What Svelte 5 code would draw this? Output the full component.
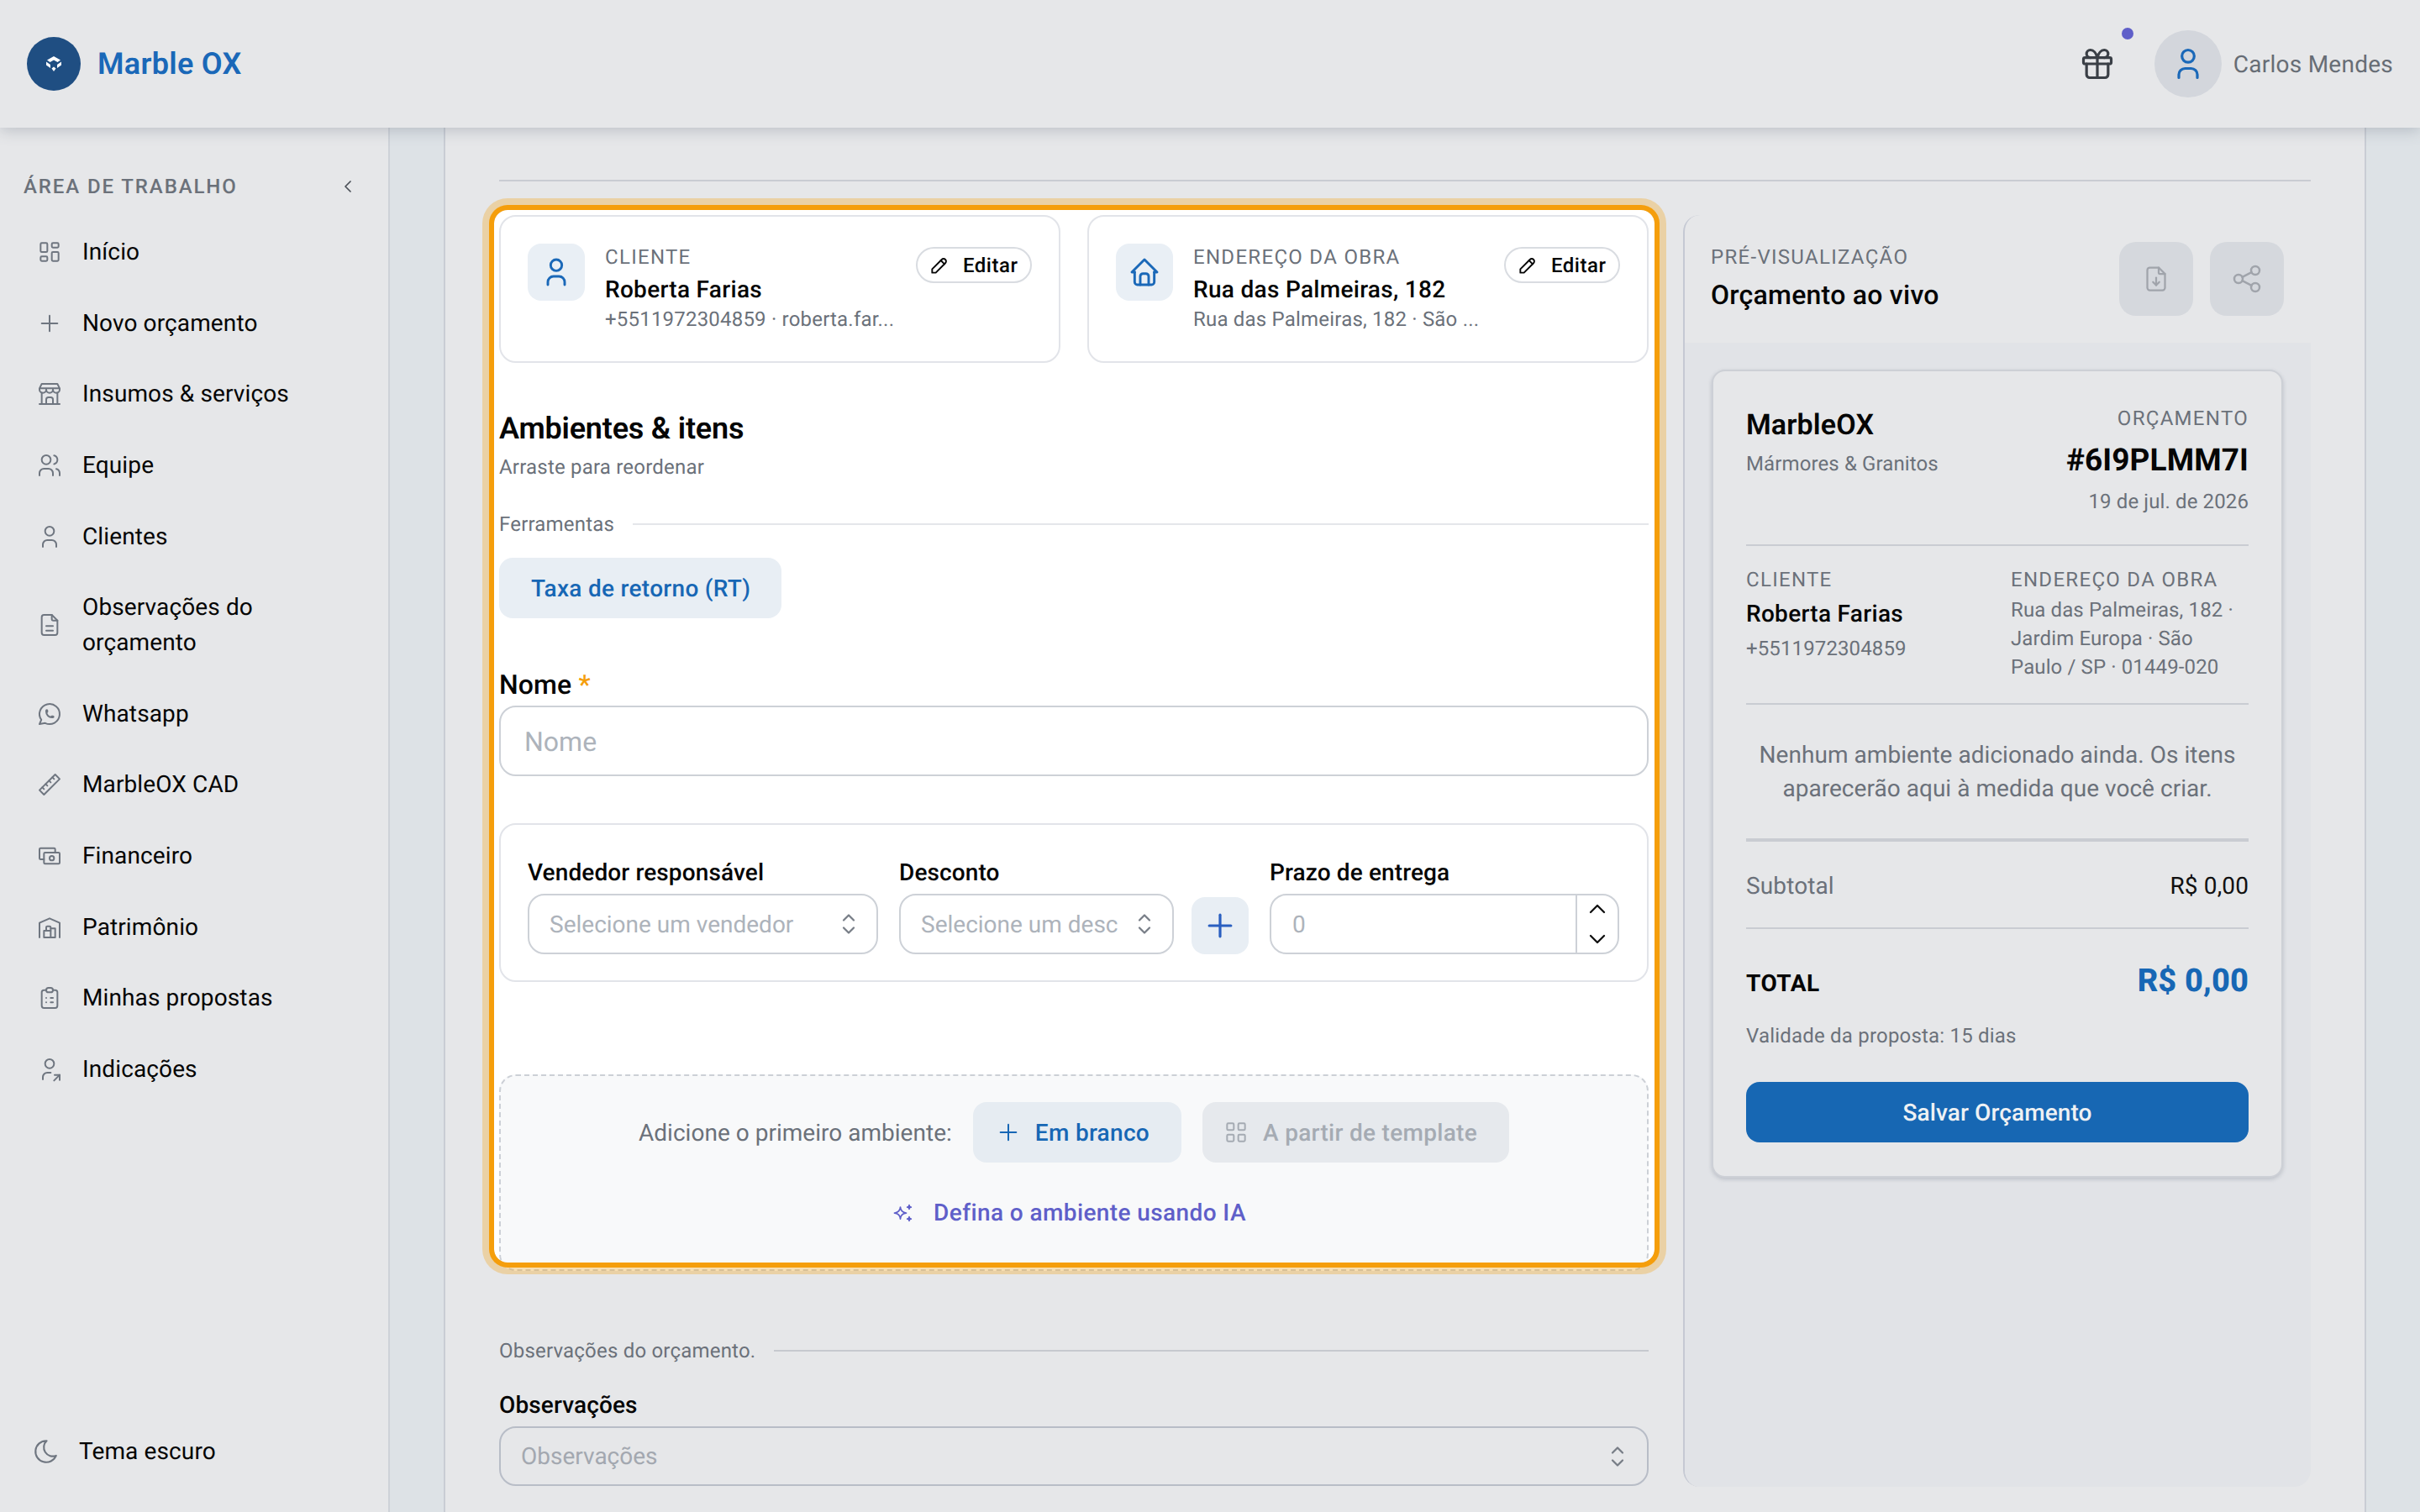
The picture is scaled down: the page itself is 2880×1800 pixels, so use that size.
<script>
  const P = {
    dash: ["M5 4h4a1 1 0 0 1 1 1v6a1 1 0 0 1 -1 1h-4a1 1 0 0 1 -1 -1v-6a1 1 0 0 1 1 -1","M5 16h4a1 1 0 0 1 1 1v2a1 1 0 0 1 -1 1h-4a1 1 0 0 1 -1 -1v-2a1 1 0 0 1 1 -1","M15 12h4a1 1 0 0 1 1 1v6a1 1 0 0 1 -1 1h-4a1 1 0 0 1 -1 -1v-6a1 1 0 0 1 1 -1","M15 4h4a1 1 0 0 1 1 1v2a1 1 0 0 1 -1 1h-4a1 1 0 0 1 -1 -1v-2a1 1 0 0 1 1 -1"],
    grid: ["M4 5a1 1 0 0 1 1 -1h4a1 1 0 0 1 1 1v4a1 1 0 0 1 -1 1h-4a1 1 0 0 1 -1 -1z","M14 5a1 1 0 0 1 1 -1h4a1 1 0 0 1 1 1v4a1 1 0 0 1 -1 1h-4a1 1 0 0 1 -1 -1z","M4 15a1 1 0 0 1 1 -1h4a1 1 0 0 1 1 1v4a1 1 0 0 1 -1 1h-4a1 1 0 0 1 -1 -1z","M14 15a1 1 0 0 1 1 -1h4a1 1 0 0 1 1 1v4a1 1 0 0 1 -1 1h-4a1 1 0 0 1 -1 -1z"],
    plus: ["M12 5v14","M5 12h14"],
    store: ["M3 21l18 0","M3 7v1a3 3 0 0 0 6 0v-1m0 1a3 3 0 0 0 6 0v-1m0 1a3 3 0 0 0 6 0v-1h-18l2 -4h14l2 4","M5 21l0 -10.15","M19 21l0 -10.15","M9 21v-4a2 2 0 0 1 2 -2h2a2 2 0 0 1 2 2v4"],
    users: ["M9 7m-4 0a4 4 0 1 0 8 0a4 4 0 1 0 -8 0","M3 21v-2a4 4 0 0 1 4 -4h4a4 4 0 0 1 4 4v2","M16 3.13a4 4 0 0 1 0 7.75","M21 21v-2a4 4 0 0 0 -3 -3.85"],
    user: ["M8 7a4 4 0 1 0 8 0a4 4 0 0 0 -8 0","M6 21v-2a4 4 0 0 1 4 -4h4a4 4 0 0 1 4 4v2"],
    file: ["M14 3v4a1 1 0 0 0 1 1h4","M17 21h-10a2 2 0 0 1 -2 -2v-14a2 2 0 0 1 2 -2h7l5 5v11a2 2 0 0 1 -2 2z","M9 17h6","M9 13h6"],
    whatsapp: ["M3 21l1.65 -3.8a9 9 0 1 1 3.4 2.9l-5.05 .9","M9 10a.5 .5 0 0 0 1 0v-1a.5 .5 0 0 0 -1 0v1a5 5 0 0 0 5 5h1a.5 .5 0 0 0 0 -1h-1a.5 .5 0 0 0 0 1"],
    ruler: ["M17 3l4 4l-14 14l-4 -4z","M16 7l-1.5 -1.5","M13 10l-1.5 -1.5","M10 13l-1.5 -1.5","M7 16l-1.5 -1.5"],
    cash: ["M7 15h-3a1 1 0 0 1 -1 -1v-8a1 1 0 0 1 1 -1h12a1 1 0 0 1 1 1v3","M7 10a1 1 0 0 1 1 -1h12a1 1 0 0 1 1 1v8a1 1 0 0 1 -1 1h-12a1 1 0 0 1 -1 -1z","M12 14a2 2 0 1 0 4 0a2 2 0 0 0 -4 0"],
    warehouse: ["M3 21v-13l9 -4l9 4v13","M13 13h4v8h-10v-6h6","M13 21v-9a1 1 0 0 0 -1 -1h-2a1 1 0 0 0 -1 1v3"],
    clipboard: ["M9 5h-2a2 2 0 0 0 -2 2v12a2 2 0 0 0 2 2h10a2 2 0 0 0 2 -2v-12a2 2 0 0 0 -2 -2h-2","M9 5a2 2 0 0 1 2 -2h2a2 2 0 0 1 2 2v0a2 2 0 0 1 -2 2h-2a2 2 0 0 1 -2 -2z","M9 12l.01 0","M13 12l2 0","M9 16l.01 0","M13 16l2 0"],
    userShare: ["M8 7a4 4 0 1 0 8 0a4 4 0 0 0 -8 0","M6 21v-2a4 4 0 0 1 4 -4h3","M16 22l5 -5","M21 21.5v-4.5h-4.5"],
    moon: ["M12 3c.132 0 .263 0 .393 0a7.5 7.5 0 0 0 7.92 12.446a9 9 0 1 1 -8.313 -12.454z"],
    left: ["M15 6l-6 6l6 6"],
    up: ["M6 15l6 -6l6 6"],
    down: ["M6 9l6 6l6 -6"],
    selector: ["M8 9l4 -4l4 4","M16 15l-4 4l-4 -4"],
    pencil: ["M4 20h4l10.5 -10.5a2.828 2.828 0 1 0 -4 -4l-10.5 10.5v4","M13.5 6.5l4 4"],
    home: ["M5 12l-2 0l9 -9l9 9l-2 0","M5 12v7a2 2 0 0 0 2 2h10a2 2 0 0 0 2 -2v-7","M9 21v-6a2 2 0 0 1 2 -2h2a2 2 0 0 1 2 2v6"],
    gift: ["M4 8h16a1 1 0 0 1 1 1v2a1 1 0 0 1 -1 1h-16a1 1 0 0 1 -1 -1v-2a1 1 0 0 1 1 -1z","M12 8l0 13","M19 12v7a2 2 0 0 1 -2 2h-10a2 2 0 0 1 -2 -2v-7","M7.5 8a2.5 2.5 0 0 1 0 -5a4.8 8 0 0 1 4.5 5a4.8 8 0 0 1 4.5 -5a2.5 2.5 0 0 1 0 5"],
    fileDown: ["M14 3v4a1 1 0 0 0 1 1h4","M17 21h-10a2 2 0 0 1 -2 -2v-14a2 2 0 0 1 2 -2h7l5 5v11a2 2 0 0 1 -2 2z","M12 17v-6","M9.5 14.5l2.5 2.5l2.5 -2.5"],
    share: ["M3 12a3 3 0 1 0 6 0a3 3 0 1 0 -6 0","M15 6a3 3 0 1 0 6 0a3 3 0 1 0 -6 0","M15 18a3 3 0 1 0 6 0a3 3 0 1 0 -6 0","M8.7 10.7l6.6 -3.4","M8.7 13.3l6.6 3.4"],
    sparkles: ["M16 18a2 2 0 0 1 2 2a2 2 0 0 1 2 -2a2 2 0 0 1 -2 -2a2 2 0 0 1 -2 2zm0 -12a2 2 0 0 1 2 2a2 2 0 0 1 2 -2a2 2 0 0 1 -2 -2a2 2 0 0 1 -2 2zm-7 12a6 6 0 0 1 6 -6a6 6 0 0 1 -6 -6a6 6 0 0 1 -6 6a6 6 0 0 1 6 6z"]
  };
  const nav = [
    ["dash", "Início"], ["plus", "Novo orçamento"], ["store", "Insumos & serviços"], ["users", "Equipe"],
    ["user", "Clientes"], ["file", "Observações do orçamento"], ["whatsapp", "Whatsapp"], ["ruler", "MarbleOX CAD"],
    ["cash", "Financeiro"], ["warehouse", "Patrimônio"], ["clipboard", "Minhas propostas"], ["userShare", "Indicações"]
  ];
</script>

{#snippet icon(name, size, sw = 1.5)}
  <svg class="ic" width={size} height={size} viewBox="0 0 24 24" fill="none" stroke="currentColor" stroke-width={sw} stroke-linecap="round" stroke-linejoin="round">
    {#each P[name] as d}<path {d} />{/each}
  </svg>
{/snippet}

<div class="root">
  <header class="top">
    <div class="brand">
      <span class="logo">
        <svg width="20" height="18" viewBox="0 0 20 18" fill="#fff">
          <path d="M10 0 18 4.5 14.5 7 10 4.5 5.500 7 2 4.500Z" />
          <path d="M1 6.500 6 10V14L1 10.500Z" />
          <path d="M19 6.500 14 10V14L19 10.500Z" />
          <path d="M7.500 14.500 10 12.500 12.500 14.500 10 18Z" />
        </svg>
      </span>
      <span class="brandname">Marble OX</span>
    </div>
    <div class="topright">
      <span class="gift">{@render icon("gift", 44, 1.75)}<i class="dot"></i></span>
      <span class="avatar">{@render icon("user", 44, 1.75)}</span>
      <span class="username">Carlos Mendes</span>
    </div>
  </header>

  <aside class="side">
    <div class="sidehead">
      <span>ÁREA DE TRABALHO</span>
      {@render icon("left", 24, 1.75)}
    </div>
    <nav>
      {#each nav as [ic, label]}
        <div class="navitem">
          <span class="navic">{@render icon(ic, 32)}</span>
          <span class="navlabel">{label}</span>
        </div>
      {/each}
    </nav>
    <div class="theme">
      <span class="navic">{@render icon("moon", 34)}</span>
      <span>Tema escuro</span>
    </div>
  </aside>

  <main class="panel">
    <div class="rule"></div>
    <div class="cols">
      <section class="left">
        <div class="spot">
          <div class="cards">
            <div class="card">
              <span class="tile">{@render icon("user", 40, 1.75)}</span>
              <div class="cardtext">
                <div class="cap">CLIENTE</div>
                <div class="cname">Roberta Farias</div>
                <div class="csub">+5511972304859 · roberta.far...</div>
              </div>
              <span class="edit">{@render icon("pencil", 26, 1.75)}<span>Editar</span></span>
            </div>
            <div class="card">
              <span class="tile">{@render icon("home", 40, 1.75)}</span>
              <div class="cardtext">
                <div class="cap">ENDEREÇO DA OBRA</div>
                <div class="cname">Rua das Palmeiras, 182</div>
                <div class="csub">Rua das Palmeiras, 182 · São ...</div>
              </div>
              <span class="edit">{@render icon("pencil", 26, 1.75)}<span>Editar</span></span>
            </div>
          </div>

          <h2 class="title">Ambientes &amp; itens</h2>
          <p class="hint">Arraste para reordenar</p>

          <div class="divider tools"><span>Ferramentas</span><i></i></div>
          <span class="softbtn rt">Taxa de retorno (RT)</span>

          <div class="namelabel">Nome <b>*</b></div>
          <div class="field name"><span>Nome</span></div>

          <div class="rowcard">
            <div class="fld">
              <div class="lab">Vendedor responsável</div>
              <div class="field sel"><span>Selecione um vendedor</span><em>{@render icon("selector", 36)}</em></div>
            </div>
            <div class="fld">
              <div class="lab">Desconto</div>
              <div class="descrow">
                <div class="field sel"><span>Selecione um desc</span><em>{@render icon("selector", 36)}</em></div>
                <span class="plusbtn">{@render icon("plus", 44, 1.75)}</span>
              </div>
            </div>
            <div class="fld">
              <div class="lab">Prazo de entrega</div>
              <div class="field num">
                <span>0</span>
                <div class="stepper">
                  <em>{@render icon("up", 32, 1.75)}</em>
                  <em>{@render icon("down", 32, 1.75)}</em>
                </div>
              </div>
            </div>
          </div>

          <div class="drop">
            <div class="droprow">
              <span class="dropq">Adicione o primeiro ambiente:</span>
              <span class="softbtn blank">{@render icon("plus", 32)}<span>Em branco</span></span>
              <span class="softbtn tmpl">{@render icon("grid", 32)}<span>A partir de template</span></span>
            </div>
            <div class="ai">{@render icon("sparkles", 28)}<span>Defina o ambiente usando IA</span></div>
          </div>
        </div>

        <div class="divider obs"><span>Observações do orçamento.</span><i></i></div>
        <div class="lab obslab">Observações</div>
        <div class="field obsfield"><span>Observações</span><em>{@render icon("selector", 36)}</em></div>
      </section>

      <section class="right">
        <div class="prevhead">
          <div>
            <div class="cap pv">PRÉ-VISUALIZAÇÃO</div>
            <div class="pvtitle">Orçamento ao vivo</div>
          </div>
          <div class="pvbtns">
            <span class="pvbtn">{@render icon("fileDown", 36)}</span>
            <span class="pvbtn">{@render icon("share", 40)}</span>
          </div>
        </div>
        <div class="prevbody">
          <div class="sheet">
            <div class="shead">
              <div>
                <div class="co">MarbleOX</div>
                <div class="cosub">Mármores &amp; Granitos</div>
              </div>
              <div class="sright">
                <div class="cap">ORÇAMENTO</div>
                <div class="sid">#6I9PLMM7I</div>
                <div class="cosub date">19 de jul. de 2026</div>
              </div>
            </div>
            <hr class="l1" />
            <div class="sparties">
              <div>
                <div class="cap">CLIENTE</div>
                <div class="sname">Roberta Farias</div>
                <div class="sphone">+5511972304859</div>
              </div>
              <div>
                <div class="cap">ENDEREÇO DA OBRA</div>
                <div class="saddr">Rua das Palmeiras, 182 · Jardim Europa · São Paulo / SP · 01449-020</div>
              </div>
            </div>
            <hr class="l2" />
            <p class="empty">Nenhum ambiente adicionado ainda. Os itens aparecerão aqui à medida que você criar.</p>
            <hr class="l3" />
            <div class="subtotal"><span>Subtotal</span><b>R$ 0,00</b></div>
            <hr class="l4" />
            <div class="total"><span>TOTAL</span><b>R$ 0,00</b></div>
            <div class="valid">Validade da proposta: 15 dias</div>
            <div class="save">Salvar Orçamento</div>
          </div>
        </div>
      </section>
    </div>
  </main>
</div>

<style>
  :global(body) { margin: 0; background: #dde2e6; }
  * { box-sizing: border-box; }
  .ic { display: block; flex: none; }
  .root {
    width: 2880px; height: 1800px; overflow: hidden;
    display: grid; grid-template-columns: 464px 1fr; grid-template-rows: 152px 1fr;
    font-family: Roboto, "Liberation Sans", sans-serif; color: #050505; background: #dde2e6;
    text-rendering: geometricPrecision; letter-spacing: .12px;
  }
  .top {
    grid-column: 1 / 3; background: #e6e7e9; display: flex; justify-content: space-between; align-items: center;
    padding: 0 32px; position: relative; z-index: 2;
    box-shadow: 0 4px 16px rgba(90, 100, 120, .28);
  }
  .brand { display: flex; align-items: center; gap: 20px; }
  .logo { width: 64px; height: 64px; border-radius: 50%; background: #1f4e82; display: grid; place-items: center; }
  .brandname { font-size: 36px; font-weight: 600; color: #1a68b8; letter-spacing: .3px; }
  .topright { display: flex; align-items: center; }
  .gift { position: relative; color: #3a3f46; margin-right: 46px; }
  .dot { position: absolute; width: 14px; height: 14px; border-radius: 50%; background: #5f5fc9; top: -21px; right: -21px; }
  .avatar { width: 80px; height: 80px; border-radius: 50%; background: #d3d6dc; color: #1a68b8; display: grid; place-items: center; margin-right: 14px; }
  .username { font-size: 28px; color: #676d75; letter-spacing: .25px; }

  .side { background: #e6e7e9; border-right: 2px solid #ced2d8; display: flex; flex-direction: column; min-height: 0; }
  .sidehead { display: flex; justify-content: space-between; align-items: center; padding: 56px 36px 0 28px; height: 84px; margin-bottom: 22px; font-size: 24px; font-weight: 500; letter-spacing: 1.9px; color: #6b717a; }
  .sidehead .ic { color: #4b5058; }
  .navitem { display: flex; align-items: center; gap: 23px; padding: 21.3px 0 21.3px 43px; font-size: 28px; line-height: 42px; }
  .navic { color: #6f7680; display: block; }
  .navlabel { max-width: 300px; }
  .theme { margin-top: auto; display: flex; align-items: center; gap: 22px; padding: 0 0 50px 38px; font-size: 28px; line-height: 44px; }

  .panel { margin: 0 64px 0 64px; background: #e6e7e9; border-left: 2px solid #c9cdd4; border-right: 2px solid #c9cdd4; padding: 62px 64px 0; overflow: hidden; }
  .rule { height: 2px; background: #c9ccd2; margin-bottom: 40px; }
  .cols { display: grid; grid-template-columns: 1368px 747px; column-gap: 41px; }

  .spot { position: relative; background: #fff; border-radius: 16px; margin: -6px -7px 0 -6px; padding: 6px 7px 0 6px; height: 1253px; }
  .spot::after { content: ""; position: absolute; inset: 0; border-radius: 16px; pointer-events: none; box-shadow: 0 0 0 6px #f59e0b, 0 0 0 14px rgba(245, 158, 11, .3); }

  .cards { display: grid; grid-template-columns: 1fr 1fr; gap: 32px; }
  .card { border: 2px solid #e2e4e9; border-radius: 20px; padding: 32px; display: flex; gap: 24px; min-height: 176px; }
  .tile { width: 68px; height: 68px; border-radius: 16px; background: #e9eff5; color: #1a68b8; display: grid; place-items: center; flex: none; }
  .cardtext { flex: 1; min-width: 0; }
  .cap { font-size: 24px; line-height: 30px; letter-spacing: 1.3px; color: #6b717a; white-space: nowrap; padding-top: 1px; }
  .cname { font-size: 28px; font-weight: 500; line-height: 38px; margin-top: 5px; white-space: nowrap; letter-spacing: .3px; }
  .csub { font-size: 24px; line-height: 32px; color: #6b717a; white-space: nowrap; letter-spacing: .2px; }
  .edit { display: inline-flex; align-items: center; gap: 15px; height: 43px; width: 138px; border: 2px solid #d9dce1; border-radius: 22px; padding: 0 13px; margin-top: 4px; font-size: 24px; font-weight: 500; flex: none; letter-spacing: .5px; }

  .title { font-size: 36px; line-height: 50px; font-weight: 600; margin: 53px 0 0; letter-spacing: -.2px; }
  .hint { font-size: 24px; line-height: 34px; color: #6b717a; margin: 4px 0 0; letter-spacing: .2px; }
  .divider { display: flex; align-items: center; gap: 22px; font-size: 24px; line-height: 34px; color: #6b717a; letter-spacing: .2px; }
  .divider i { flex: 1; height: 2px; background: #e4e6ea; }
  .tools { margin-top: 34px; }
  .softbtn { display: inline-flex; align-items: center; height: 72px; border-radius: 16px; font-size: 28px; font-weight: 500; background: #e8eef4; color: #1767b5; letter-spacing: .3px; white-space: nowrap; }
  .rt { margin-top: 23px; padding: 0 38px; width: 336px; }

  .namelabel { font-size: 32px; line-height: 40px; font-weight: 470; margin-top: 59px; }
  .namelabel b { color: #f59e0b; font-weight: 500; }
  .field { border: 2px solid #cdd1d7; border-radius: 20px; display: flex; align-items: center; color: #adb3bb; background: #fff; letter-spacing: 0; }
  .field em { margin-left: auto; color: #777d86; font-style: normal; display: block; }
  .name { height: 84px; margin-top: 5px; padding: 2px 28px 0; font-size: 32px; }

  .rowcard { margin-top: 56px; height: 189px; border: 2px solid #e2e4e9; border-radius: 20px; padding: 40px 32px 0; display: grid; grid-template-columns: 417px 416px 416px; column-gap: 25px; }
  .lab { font-size: 28px; line-height: 34px; font-weight: 470; }
  .sel { height: 72px; margin-top: 8px; padding: 0 15px 0 24px; font-size: 28px; white-space: nowrap; flex: 1; min-width: 0; overflow: hidden; }
  .descrow { display: flex; gap: 21px; align-items: flex-end; }
  .plusbtn { width: 68px; height: 68px; border-radius: 16px; background: #e8eef4; color: #2a5fc0; display: grid; place-items: center; flex: none; }
  .num { height: 72px; margin-top: 8px; padding-left: 25px; font-size: 28px; overflow: hidden; }
  .stepper { margin-left: auto; width: 50px; height: 100%; border-left: 2px solid #cdd1d7; display: flex; flex-direction: column; align-items: center; justify-content: space-between; color: #111; }
  .stepper em { color: #111; margin: 0; }

  .drop { margin-top: 110px; height: 234px; background: #f8f9fa; border: 2px dashed #ccd0d6; border-radius: 20px; padding-top: 31px; display: flex; flex-direction: column; align-items: center; }
  .droprow { display: flex; align-items: center; gap: 25px; }
  .dropq { font-size: 28px; color: #6b717a; letter-spacing: .02px; }
  .blank { gap: 16px; padding: 0 38px 0 26px; background: #e6ecf2; }
  .tmpl { gap: 16px; padding: 0 38px 0 24px; background: #e6e9ed; color: #a5abb3; }
  .ai { display: flex; align-items: center; gap: 22px; margin-top: 40px; line-height: 40px; font-size: 28px; font-weight: 500; color: #5f5fc9; margin-left: -12px; letter-spacing: .4px; }

  .obs { margin-top: 88px; }
  .divider.obs i { background: #c6c9cf; }
  .obslab { margin-top: 31px; }
  .obsfield { height: 71px; margin-top: 8px; padding: 0 17px 0 24px; font-size: 28px; background: transparent; border-color: #b8bdc7; color: #a3a8b0; border-radius: 20px; }

  .right { height: 1514px; border-left: 2px solid #c5c9d3; border-radius: 20px 0 0 20px; display: flex; flex-direction: column; overflow: hidden; }
  .prevhead { height: 152px; flex: none; display: flex; justify-content: space-between; align-items: center; padding: 0 32px 0 31px; }
  .pv { line-height: 30px; font-size: 24px; margin-top: -2px; }
  .pvtitle { font-size: 32px; font-weight: 500; line-height: 44px; margin-top: 8px; letter-spacing: .25px; }
  .pvbtns { display: flex; gap: 20px; }
  .pvbtn { width: 88px; height: 88px; border-radius: 20px; background: #d5d8dd; color: #a0a4ab; display: grid; place-items: center; }
  .prevbody { flex: 1; background: #e1e3e7; padding: 32px 33px 0 32px; border-radius: 0 0 20px 0; }
  .sheet { background: #e6e7e9; border: 2px solid #cdd0d6; border-radius: 16px; padding: 40px 39px 40px; box-shadow: 0 2px 5px rgba(60, 70, 90, .22); }
  .shead { display: flex; justify-content: space-between; }
  .co { font-size: 34px; line-height: 44px; font-weight: 600; padding-top: 2px; margin-bottom: -2px; }
  .cosub { font-size: 24px; line-height: 32px; color: #6b717a; margin-top: 10px; }
  .sright { text-align: right; }
  .sright .cap { line-height: 30px; }
  .sid { font-size: 37px; line-height: 48px; font-weight: 700; margin-top: 12px; margin-bottom: -2px; }
  hr { border: 0; margin: 0; background: #c9ccd2; height: 2px; }
  .l1 { margin-top: 35px; }
  .sparties { display: grid; grid-template-columns: 315px 1fr; padding-top: 24px; }
  .sname { font-size: 28px; font-weight: 500; line-height: 36px; margin-top: 8px; letter-spacing: .3px; }
  .sphone { font-size: 24px; line-height: 30px; color: #6b717a; margin-top: 8px; }
  .saddr { font-size: 24px; line-height: 34px; color: #6b717a; margin-top: 4px; padding-right: 12px; }
  .l2 { margin-top: 26px; }
  .empty { margin: 40px 0 0; font-size: 28px; line-height: 40px; color: #6b717a; text-align: center; letter-spacing: .04px; }
  .l3 { margin-top: 39px; height: 4px; }
  .subtotal { display: flex; justify-content: space-between; align-items: center; margin-top: 36px; line-height: 34px; font-size: 28px; color: #6b717a; }
  .subtotal b { font-weight: 400; color: #111; }
  .l4 { margin-top: 32px; }
  .total { display: flex; justify-content: space-between; align-items: center; margin-top: 35px; line-height: 48px; font-size: 28px; font-weight: 700; }
  .total span { letter-spacing: .5px; padding-top: 6px; }
  .total b { font-size: 38px; font-weight: 800; color: #1767b5; }
  .valid { margin-top: 23px; font-size: 24px; line-height: 30px; color: #6b717a; letter-spacing: .2px; }
  .save { margin-top: 40px; height: 72px; border-radius: 16px; background: #1767b3; color: #eef1f4; display: grid; place-items: center; font-size: 28px; font-weight: 500; }
</style>
